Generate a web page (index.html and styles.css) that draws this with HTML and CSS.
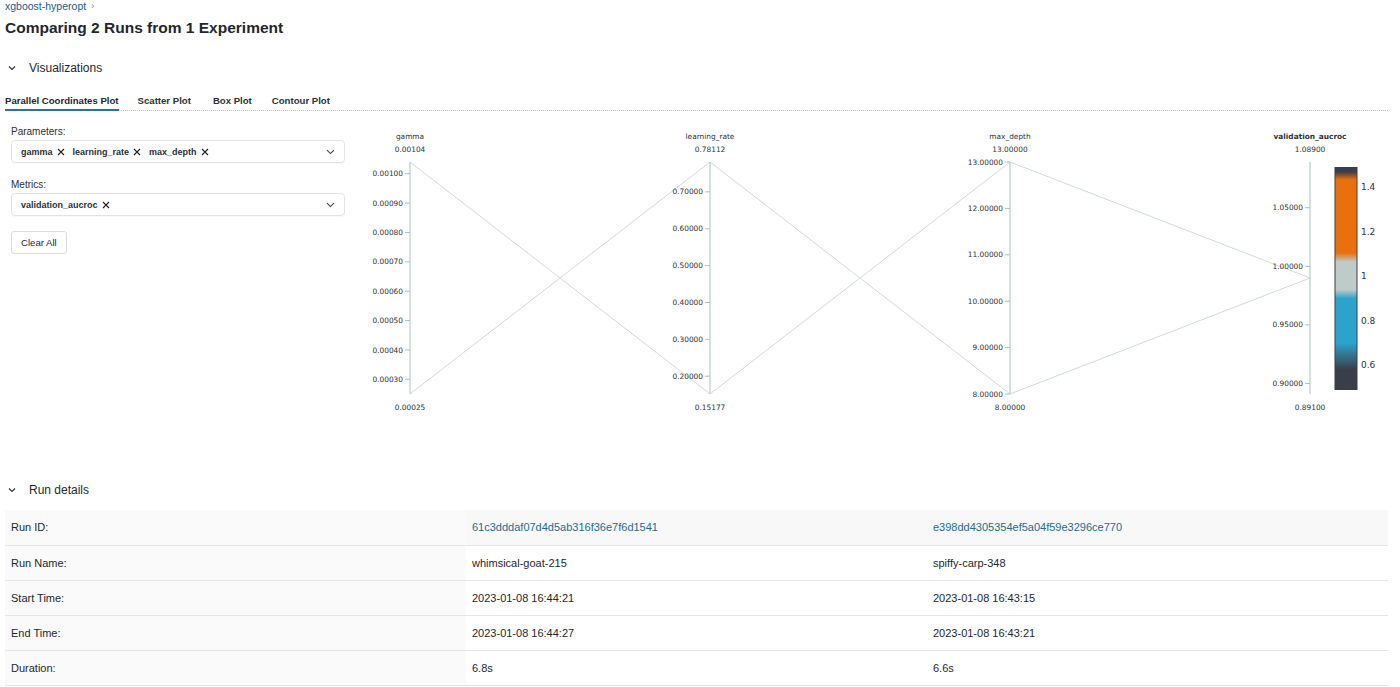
FILE: index.html
```html
<!DOCTYPE html>
<html lang="en">
<head>
<meta charset="utf-8">
<title>Comparing 2 Runs from 1 Experiment</title>
<link rel="stylesheet" href="styles.css">
</head>
<body>
<div class="page">
  <div class="breadcrumb"><a class="crumb-link">xgboost-hyperopt</a><span class="sep">›</span></div>
  <h1 class="title">Comparing 2 Runs from 1 Experiment</h1>

  <div class="section-header">
    <svg class="chev" width="8" height="6" viewBox="0 0 8 6"><path d="M1 1.5 L4 4.5 L7 1.5" fill="none" stroke="#333" stroke-width="1.2"/></svg>
    <span>Visualizations</span>
  </div>

  <div class="tabs">
    <div class="tab active">Parallel Coordinates Plot</div>
    <div class="tab">Scatter Plot</div>
    <div class="tab">Box Plot</div>
    <div class="tab">Contour Plot</div>
  </div>

  <div class="viz">
    <div class="controls">
      <div class="field-label">Parameters:</div>
      <div class="select">
        <div class="chips">
          <span class="chip">gamma<svg class="x" width="8" height="8" viewBox="0 0 8 8"><path d="M1 1L7 7M7 1L1 7" stroke="#222" stroke-width="1.1"/></svg></span>
          <span class="chip">learning_rate<svg class="x" width="8" height="8" viewBox="0 0 8 8"><path d="M1 1L7 7M7 1L1 7" stroke="#222" stroke-width="1.1"/></svg></span>
          <span class="chip">max_depth<svg class="x" width="8" height="8" viewBox="0 0 8 8"><path d="M1 1L7 7M7 1L1 7" stroke="#222" stroke-width="1.1"/></svg></span>
        </div>
        <svg class="caret" width="9" height="6" viewBox="0 0 9 6"><path d="M1 1.2 L4.5 4.6 L8 1.2" fill="none" stroke="#444" stroke-width="1.1"/></svg>
      </div>
      <div class="field-label second">Metrics:</div>
      <div class="select">
        <div class="chips">
          <span class="chip">validation_aucroc<svg class="x" width="8" height="8" viewBox="0 0 8 8"><path d="M1 1L7 7M7 1L1 7" stroke="#222" stroke-width="1.1"/></svg></span>
        </div>
        <svg class="caret" width="9" height="6" viewBox="0 0 9 6"><path d="M1 1.2 L4.5 4.6 L8 1.2" fill="none" stroke="#444" stroke-width="1.1"/></svg>
      </div>
      <button class="btn">Clear All</button>
    </div>

    <svg class="plot" width="1035" height="300" viewBox="0 0 1035 300">
      <defs>
        <linearGradient id="cb" x1="0" y1="0" x2="0" y2="1">
          <stop offset="0" stop-color="#3a3e4b"/>
          <stop offset="0.02" stop-color="#3a3e4b"/>
          <stop offset="0.055" stop-color="#e9700d"/>
          <stop offset="0.385" stop-color="#e9700d"/>
          <stop offset="0.425" stop-color="#bfcbc8"/>
          <stop offset="0.55" stop-color="#bfcbc8"/>
          <stop offset="0.59" stop-color="#2ca3ca"/>
          <stop offset="0.79" stop-color="#2ca3ca"/>
          <stop offset="0.91" stop-color="#3a3e4b"/>
          <stop offset="1" stop-color="#3a3e4b"/>
        </linearGradient>
      </defs>

      <g class="lines">
        <polyline points="55,42 355,274 655,42 955,158"/>
        <polyline points="55,274 355,42 655,274 955,158"/>
      </g>

      <g class="axis">
        <line x1="55" y1="42" x2="55" y2="274"/>
        <line x1="355" y1="42" x2="355" y2="274"/>
        <line x1="655" y1="42" x2="655" y2="274"/>
        <line x1="955" y1="42" x2="955" y2="274"/>
      </g>

      <g class="ticks">
        <line x1="50" y1="53.7" x2="55" y2="53.7"/><line x1="50" y1="83.1" x2="55" y2="83.1"/>
        <line x1="50" y1="112.5" x2="55" y2="112.5"/><line x1="50" y1="141.8" x2="55" y2="141.8"/>
        <line x1="50" y1="171.2" x2="55" y2="171.2"/><line x1="50" y1="200.6" x2="55" y2="200.6"/>
        <line x1="50" y1="230" x2="55" y2="230"/><line x1="50" y1="259.3" x2="55" y2="259.3"/>

        <line x1="350" y1="71.9" x2="355" y2="71.9"/><line x1="350" y1="108.8" x2="355" y2="108.8"/>
        <line x1="350" y1="145.6" x2="355" y2="145.6"/><line x1="350" y1="182.5" x2="355" y2="182.5"/>
        <line x1="350" y1="219.4" x2="355" y2="219.4"/><line x1="350" y1="256.2" x2="355" y2="256.2"/>

        <line x1="650" y1="42" x2="655" y2="42"/><line x1="650" y1="88.4" x2="655" y2="88.4"/>
        <line x1="650" y1="134.8" x2="655" y2="134.8"/><line x1="650" y1="181.2" x2="655" y2="181.2"/>
        <line x1="650" y1="227.6" x2="655" y2="227.6"/><line x1="650" y1="274" x2="655" y2="274"/>

        <line x1="950" y1="87.7" x2="955" y2="87.7"/><line x1="950" y1="146.3" x2="955" y2="146.3"/>
        <line x1="950" y1="204.9" x2="955" y2="204.9"/><line x1="950" y1="263.5" x2="955" y2="263.5"/>
      </g>

      <g class="tick-labels">
        <text x="48" y="53.7">0.00100</text><text x="48" y="83.1">0.00090</text>
        <text x="48" y="112.5">0.00080</text><text x="48" y="141.8">0.00070</text>
        <text x="48" y="171.2">0.00060</text><text x="48" y="200.6">0.00050</text>
        <text x="48" y="230">0.00040</text><text x="48" y="259.3">0.00030</text>

        <text x="348" y="71.9">0.70000</text><text x="348" y="108.8">0.60000</text>
        <text x="348" y="145.6">0.50000</text><text x="348" y="182.5">0.40000</text>
        <text x="348" y="219.4">0.30000</text><text x="348" y="256.2">0.20000</text>

        <text x="648" y="42">13.00000</text><text x="648" y="88.4">12.00000</text>
        <text x="648" y="134.8">11.00000</text><text x="648" y="181.2">10.00000</text>
        <text x="648" y="227.6">9.00000</text><text x="648" y="274">8.00000</text>

        <text x="948" y="87.7">1.05000</text><text x="948" y="146.3">1.00000</text>
        <text x="948" y="204.9">0.95000</text><text x="948" y="263.5">0.90000</text>
      </g>

      <g class="axis-titles">
        <text x="55" y="19">gamma</text>
        <text x="355" y="19">learning_rate</text>
        <text x="655" y="19">max_depth</text>
        <text x="955" y="19" class="bold">validation_aucroc</text>
      </g>
      <g class="axis-range">
        <text x="55" y="32">0.00104</text><text x="55" y="290">0.00025</text>
        <text x="355" y="32">0.78112</text><text x="355" y="290">0.15177</text>
        <text x="655" y="32">13.00000</text><text x="655" y="290">8.00000</text>
        <text x="955" y="32">1.08900</text><text x="955" y="290">0.89100</text>
      </g>

      <rect x="980" y="47.5" width="22" height="222" fill="url(#cb)" stroke="#3a3e4b" stroke-width="1"/>
      <g class="cb-labels">
        <text x="1006" y="67">1.4</text>
        <text x="1006" y="112">1.2</text>
        <text x="1006" y="156">1</text>
        <text x="1006" y="201">0.8</text>
        <text x="1006" y="245">0.6</text>
      </g>
    </svg>
  </div>

  <div class="section-header details-header">
    <svg class="chev" width="8" height="6" viewBox="0 0 8 6"><path d="M1 1.5 L4 4.5 L7 1.5" fill="none" stroke="#333" stroke-width="1.2"/></svg>
    <span>Run details</span>
  </div>

  <table class="details">
    <colgroup><col class="c1"><col class="c2"><col class="c3"></colgroup>
    <tbody>
      <tr class="head-row"><th>Run ID:</th><td><a class="link">61c3dddaf07d4d5ab316f36e7f6d1541</a></td><td><a class="link">e398dd4305354ef5a04f59e3296ce770</a></td></tr>
      <tr><th>Run Name:</th><td>whimsical-goat-215</td><td>spiffy-carp-348</td></tr>
      <tr><th>Start Time:</th><td>2023-01-08 16:44:21</td><td>2023-01-08 16:43:15</td></tr>
      <tr><th>End Time:</th><td>2023-01-08 16:44:27</td><td>2023-01-08 16:43:21</td></tr>
      <tr><th>Duration:</th><td>6.8s</td><td>6.6s</td></tr>
    </tbody>
  </table>
</div>
</body>
</html>
```

FILE: styles.css
```css
* { box-sizing: border-box; }
body {
  margin: 0;
  background: #fff;
  color: #1f272d;
  font-family: "Liberation Sans", Arial, Helvetica, sans-serif;
}
.page { padding: 0 12px 0 5px; }

.breadcrumb {
  height: 12px;
  font-size: 10.5px;
  line-height: 12px;
  display: flex;
  align-items: center;
}
.crumb-link { color: #1b5d84; }
.sep { color: #6f7a85; margin-left: 5px; font-size: 9px; }

.title {
  margin: 5px 0 0;
  font-size: 15.5px;
  line-height: 22px;
  font-weight: 700;
  color: #1f272d;
}

.section-header {
  display: flex;
  align-items: center;
  height: 20px;
  margin-top: 19px;
  font-size: 12px;
  color: #1f272d;
}
.chev { margin-left: 3px; margin-right: 13px; }

.tabs {
  display: flex;
  gap: 19px;
  margin-top: 12px;
  border-bottom: 1px dotted #c6c6c6;
}
.tab {
  font-size: 9.6px;
  font-weight: 700;
  line-height: 14px;
  padding: 4px 0 1px;
  color: #2b3238;
  border-bottom: 2px solid transparent;
  margin-bottom: -1px;
}
.tab:nth-child(3) { margin-left: 3px; }
.tab:nth-child(4) { margin-left: 1px; }
.tab.active { border-bottom-color: #2272b4; color: #1f272d; }

.viz { display: flex; align-items: flex-start; }
.controls {
  width: 350px;
  flex: none;
  padding-left: 6px;
  display: flex;
  flex-direction: column;
  align-items: flex-start;
}
.field-label {
  font-size: 10px;
  line-height: 13px;
  margin-top: 14px;
  color: #2b3238;
}
.field-label.second { margin-top: 15px; }
.select {
  margin-top: 2px;
  width: 334px;
  height: 23px;
  border: 1px solid #e3e3e3;
  border-radius: 4px;
  box-shadow: 0 1px 1px rgba(0,0,0,0.03);
  display: flex;
  align-items: center;
  justify-content: space-between;
  padding: 0 9px 0 9px;
}
.chips { display: flex; gap: 8px; align-items: center; }
.chip {
  display: flex;
  align-items: center;
  gap: 4px;
  font-size: 9px;
  font-weight: 700;
  color: #2b3238;
}
.x { display: block; }
.caret { display: block; margin-right: 0; }

.btn {
  margin-top: 15px;
  height: 23px;
  padding: 0 9px;
  border: 1px solid #dcdcdc;
  border-radius: 3px;
  background: #fff;
  font-family: inherit;
  font-size: 9.6px;
  color: #1f272d;
}

.plot { display: block; margin-top: 9px; flex: none; }
.lines polyline { fill: none; stroke: #d2dad9; stroke-width: 1; }
.axis line { stroke: #a9c3bf; stroke-width: 1; }
.ticks line { stroke: #a9c3bf; stroke-width: 1; }
.tick-labels text {
  font-family: "DejaVu Sans", Verdana, sans-serif;
  font-size: 7.4px;
  fill: #2f3337;
  text-anchor: end;
  dominant-baseline: central;
}
.axis-titles text, .axis-range text {
  font-family: "DejaVu Sans", Verdana, sans-serif;
  font-size: 7.4px;
  fill: #2f3337;
  text-anchor: middle;
}
.axis-titles text.bold { font-weight: 700; }
.cb-labels text {
  font-family: "DejaVu Sans", Verdana, sans-serif;
  font-size: 9px;
  fill: #2f3337;
  dominant-baseline: central;
}

.details-header { margin-top: 60px; }

.details {
  margin-top: 10px;
  width: 100%;
  border-collapse: collapse;
  table-layout: fixed;
  font-size: 11px;
  color: #1f272d;
}
.details tr { height: 35px; border-bottom: 1px solid #e6e6e6; }
.details th {
  text-align: left;
  font-weight: 400;
  padding: 0 6px;
  background: #fafafa;
}
.details td { padding: 0 6px; }
.details .head-row { background: #f8f8f8; }
.link { color: #1b6e91; }
```
